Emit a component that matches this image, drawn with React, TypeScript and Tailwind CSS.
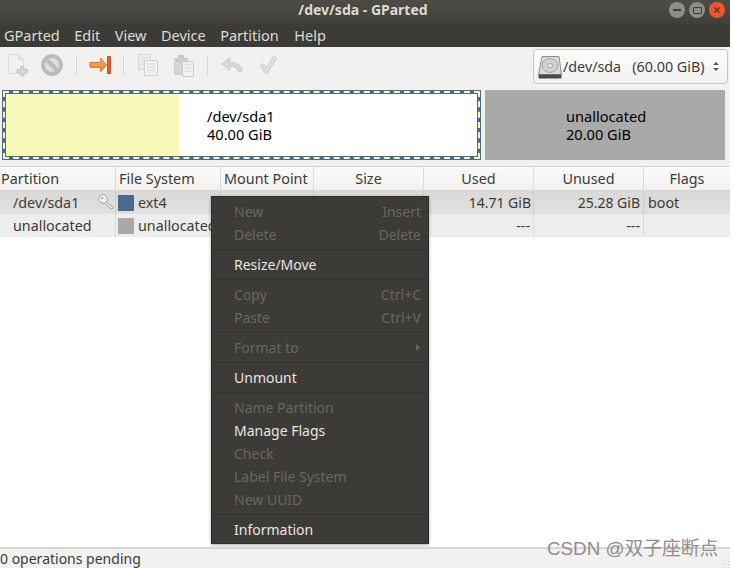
import React from "react";

const font = { fontFamily: '"Noto Sans", "Open Sans", sans-serif' };

function NewIcon() {
  return (
    <svg width="22" height="24" viewBox="0 0 22 24">
      <path d="M1.500 1.500h10l5 5v14h-15z" fill="#f3f2f0" stroke="#dedddb" />
      <path d="M11.500 1.500v5h5z" fill="#e4e3e1" stroke="#dedddb" />
      <path d="M13.500 13.500h3.500v3h3.500v3.500h-3.500v3h-3.500v-3h-3.500v-3.500h3.500z" fill="#d6d6d4" stroke="#c6c6c4" />
    </svg>
  );
}
function StopIcon() {
  return (
    <svg width="22" height="22" viewBox="0 0 22 22">
      <circle cx="11" cy="11" r="9" fill="#dfdedc" stroke="#bcbbb9" strokeWidth="3.800" />
      <path d="M5 5l12 12" stroke="#bcbbb9" strokeWidth="4" />
    </svg>
  );
}
function ApplyArrow() {
  return (
    <svg width="22" height="18" viewBox="0 0 22 18">
      <defs>
        <linearGradient id="ar" x1="0" y1="0" x2="0" y2="1">
          <stop offset="0" stopColor="#f6b07a" />
          <stop offset="1" stopColor="#e87f3a" />
        </linearGradient>
      </defs>
      <path d="M1 6.500h10.500V2l6 7-6 7v-4.500H1.500q-1.200-2.500-.5-5z" fill="url(#ar)" stroke="#dd7a35" />
      <path d="M18.500.500h3v17h-3z" fill="#e8642a" stroke="#c94c15" />
    </svg>
  );
}
function CopyIcon() {
  return (
    <svg width="20" height="22" viewBox="0 0 20 22">
      <path d="M.5.500h12v15h-12z" fill="#eeedeb" stroke="#d6d5d3" />
      <path d="M2.500 4h8M2.500 7h8M2.500 10h8" stroke="#dad9d7" />
      <path d="M6.500 6.500h13v15h-13z" fill="#f2f1ef" stroke="#d2d1cf" />
      <path d="M9 10h8M9 13h8M9 16h8" stroke="#d8d7d5" />
    </svg>
  );
}
function PasteIcon() {
  return (
    <svg width="20" height="23" viewBox="0 0 20 23">
      <path d="M.5 4.500h13v16h-13z" fill="#d8d7d5" stroke="#cdccca" />
      <path d="M4.500 4.500V1.500h5v3h2v3H2.500v-3z" fill="#cfcecc" stroke="#c4c3c1" />
      <path d="M8.500 7.500h11v15h-11z" fill="#f3f2f0" stroke="#cdccca" />
      <path d="M10.500 11h7M10.500 14h7M10.500 17h7" stroke="#d4d3d1" />
    </svg>
  );
}
function UndoIcon() {
  return (
    <svg width="22" height="17" viewBox="0 0 22 17">
      <path d="M9 .5L.8 7l8.200 6.500v-4c4-.5 6 .5 8.500 5 2 1.500 4 .5 3.500-2-1.500-4.500-6-7.500-12.500-7.500z" fill="#d9d8d6" stroke="#d0cfcd" />
    </svg>
  );
}
function CheckIcon() {
  return (
    <svg width="19" height="20" viewBox="0 0 19 20">
      <path d="M1 11l3.500-2.500 3 4L14.500.8l3.500 2L8.500 18.500H6.500z" fill="#dddcda" stroke="#d2d1cf" />
    </svg>
  );
}
function Disk() {
  return (
    <svg width="24" height="24" viewBox="0 0 24 24" className="shrink-0">
      <path d="M4 1.500h17l2.500 18H.5z" fill="#dcdcda" stroke="#8c8c8a" />
      <path d="M.5 19.500h23v3a1 1 0 0 1-1 1h-21a1 1 0 0 1-1-1z" fill="#4a4a48" />
      <ellipse cx="12" cy="10.500" rx="8" ry="7" fill="#d0d0ce" stroke="#a8a8a6" />
      <ellipse cx="12" cy="10.500" rx="2.500" ry="2" fill="#ececea" stroke="#a8a8a6" />
    </svg>
  );
}
function Key() {
  return (
    <svg width="16" height="15" viewBox="0 0 16 15">
      <circle cx="5" cy="5" r="4.300" fill="#f0efed" stroke="#a8a7a5" />
      <circle cx="4" cy="4" r="1.200" fill="#b4b3b1" />
      <path d="M8 8l7 5v1.500h-2.500L6 9" fill="#e8e7e5" stroke="#a8a7a5" />
    </svg>
  );
}

function WinBtn({ kind }: { kind: "min" | "max" | "close" }) {
  if (kind === "close")
    return (
      <div className="w-[16px] h-[16px] rounded-full bg-[#e9592c] flex items-center justify-center">
        <svg width="8" height="8" viewBox="0 0 8 8"><path d="M1.500 1.500l5 5M6.500 1.500l-5 5" stroke="#6e2a12" strokeWidth="1.200" /></svg>
      </div>
    );
  return (
    <div className="w-[16px] h-[16px] rounded-full bg-[#8e8d87] flex items-center justify-center">
      {kind === "min" ? (
        <div className="w-[8px] h-[2px] bg-[#3f3e3a]" />
      ) : (
        <div className="w-[9px] h-[7px] border border-[#3f3e3a] rounded-[1px]" />
      )}
    </div>
  );
}

function Sep() {
  return <div className="w-px h-[21px] bg-[#dbdad7]" />;
}

function Header({ w, label, align = "" }: { w: string; label: string; align?: string }) {
  return (
    <div className={`${w} h-full shrink-0 border-r border-[#dcdbd9] flex items-center ${align}`}>
      {label}
    </div>
  );
}

function MI({ label, hint, on, arrow }: { label: string; hint?: string; on?: boolean; arrow?: boolean }) {
  return (
    <div className={`h-[23px] pl-[22px] pr-[7px] flex items-center justify-between ${on ? "text-[#e8e6e1]" : "text-[#68665f]"}`}>
      <span>{label}</span>
      {hint && <span>{hint}</span>}
      {arrow && (
        <svg width="4" height="7" viewBox="0 0 4 7" className="mr-[1px]"><path d="M0 0l4 3.500L0 7z" fill="#68665f" /></svg>
      )}
    </div>
  );
}
function MS() {
  return (
    <div className="h-[7px] flex items-center">
      <div className="h-px w-full bg-[#33322e]" />
    </div>
  );
}

export default function App() {
  return (
    <div className="relative w-[733px] h-[568px] overflow-hidden bg-white text-[14px] text-[#3c3b37]" style={font}>
      <div className="w-[730px] h-full flex flex-col">
        {/* title */}
        <div className="h-[24px] shrink-0 bg-gradient-to-b from-[#4d4c47] to-[#403f3b] relative flex items-center justify-center">
          <span className="font-bold text-[14px] text-[#dfdbd2] leading-none mb-[4px] mr-[4px]">/dev/sda - GParted</span>
          <div className="absolute right-[5px] top-[2px] flex gap-[4px]">
            <WinBtn kind="min" />
            <WinBtn kind="max" />
            <WinBtn kind="close" />
          </div>
        </div>
        {/* menu */}
        <div className="h-[23px] shrink-0 bg-[#3c3b37] flex items-center pl-[4px] gap-[14.500px] text-[14.5px] text-[#dfdbd2]">
          <span>GParted</span>
          <span>Edit</span>
          <span>View</span>
          <span>Device</span>
          <span>Partition</span>
          <span className="ml-[1px]">Help</span>
        </div>
        {/* toolbar */}
        <div className="h-[38px] shrink-0 bg-[#f2f1f0] flex items-center pl-[7px] pr-[2px]">
          <div className="flex items-center mb-[2px]">
            <NewIcon />
            <div className="ml-[12px]"><StopIcon /></div>
            <div className="ml-[13px]"><Sep /></div>
            <div className="ml-[12px]"><ApplyArrow /></div>
            <div className="ml-[12px]"><Sep /></div>
            <div className="ml-[14px]"><CopyIcon /></div>
            <div className="ml-[16px]"><PasteIcon /></div>
            <div className="ml-[13px]"><Sep /></div>
            <div className="ml-[13px]"><UndoIcon /></div>
            <div className="ml-[16px]"><CheckIcon /></div>
          </div>
          <div className="ml-auto w-[195px] h-[35px] mt-[1px] bg-gradient-to-b from-[#fdfdfd] to-[#f2f1f0] border border-[#c8c6c3] rounded-[4px] flex items-center pl-[4px] pr-[8px] text-[#3c3b37]">
            <Disk />
            <span className="whitespace-pre ml-px text-[14.3px]">/dev/sda   (60.00 GiB)</span>
            <div className="ml-auto flex flex-col gap-[3px]">
              <svg width="6" height="3" viewBox="0 0 6 3"><path d="M3 0L6 3H0z" fill="#5a5955" /></svg>
              <svg width="6" height="3" viewBox="0 0 6 3"><path d="M3 3L6 0H0z" fill="#5a5955" /></svg>
            </div>
          </div>
        </div>
        {/* graph */}
        <div className="h-[81px] shrink-0 bg-[#f2f1f0] pl-[2px] pr-[5px] pt-[5px] flex gap-[4px] text-[14.6px] text-black leading-[18px]">
          <div className="w-[479px] h-[70px] bg-[#4b6a8b] p-[1px]">
            <div className="h-full w-full border-[2px] border-dashed border-[#f8f8b8] bg-[#4b6a8b] p-[1px]">
              <div className="h-full w-full flex">
                <div className="w-[173px] bg-[#f8f8b8]" />
                <div className="flex-1 bg-white flex flex-col justify-center pl-[28px]">
                  <span>/dev/sda1</span>
                  <span>40.00 GiB</span>
                </div>
              </div>
            </div>
          </div>
          <div className="flex-1 h-[70px] bg-[#a9a9a9] flex flex-col justify-center pl-[81px]">
            <span>unallocated</span>
            <span>20.00 GiB</span>
          </div>
        </div>
        {/* tree */}
        <div className="flex-1 min-h-0 bg-white flex flex-col">
          <div className="h-[25px] shrink-0 border-t border-[#d5d4d2] border-b bg-gradient-to-b from-[#fbfbfb] to-[#f2f1f0] flex items-center text-[14.4px]">
            <Header w="w-[116px] pl-[1px]" label="Partition" />
            <Header w="w-[105px] pl-[3px]" label="File System" />
            <Header w="w-[93px] pl-[3px]" label="Mount Point" />
            <Header w="w-[110px]" label="Size" align="justify-center" />
            <Header w="w-[110px]" label="Used" align="justify-center" />
            <Header w="w-[110px]" label="Unused" align="justify-center" />
            <div className="flex-1 text-center">Flags</div>
          </div>
          <div className="h-[23px] shrink-0 bg-gradient-to-b from-[#dcdad8] to-[#e2e0de] flex items-center text-[14.3px]">
            <div className="w-[116px] pl-[13px] border-r border-[#cfcecc] h-full flex items-center relative">
              /dev/sda1
              <div className="absolute left-[98px] top-[3px]"><Key /></div>
            </div>
            <div className="w-[105px] pl-[2px] border-r border-[#cfcecc] h-full flex items-center gap-[4px]">
              <div className="w-[16px] h-[16px] bg-[#4b6a8b]" /> ext4
            </div>
            <div className="w-[93px] h-full border-r border-[#cfcecc]" />
            <div className="w-[110px] h-full border-r border-[#cfcecc]" />
            <div className="w-[110px] h-full border-r border-[#cfcecc] flex items-center justify-end pr-[2px] text-[14px]">14.71 GiB</div>
            <div className="w-[110px] h-full border-r border-[#cfcecc] flex items-center justify-end pr-[3px] text-[14px]">25.28 GiB</div>
            <div className="pl-[4px]">boot</div>
          </div>
          <div className="h-[23px] shrink-0 bg-[#ededed] flex items-center text-[14.3px]">
            <div className="w-[116px] pl-[13px] border-r border-[#dcdbd9] h-full flex items-center">unallocated</div>
            <div className="w-[105px] pl-[2px] border-r border-[#dcdbd9] h-full flex items-center gap-[4px] overflow-hidden whitespace-nowrap">
              <div className="w-[16px] h-[16px] bg-[#a9a9a9] shrink-0" /> unallocated
            </div>
            <div className="w-[93px] h-full border-r border-[#dcdbd9]" />
            <div className="w-[110px] h-full border-r border-[#dcdbd9]" />
            <div className="w-[110px] h-full border-r border-[#dcdbd9] flex items-center justify-end pr-[3px]">---</div>
            <div className="w-[110px] h-full border-r border-[#dcdbd9] flex items-center justify-end pr-[3px]">---</div>
          </div>
        </div>
        {/* status */}
        <div className="h-[21px] shrink-0 bg-[#f2f1f0] border-t-2 border-[#d8d7d5] flex items-center justify-between">
          <span>0 operations pending</span>
          <svg width="11" height="11" viewBox="0 0 11 11" className="self-end">
            <g fill="#d4d3d1">
              <rect x="9" y="1" width="1" height="1" />
              <rect x="6" y="4" width="1" height="1" />
              <rect x="9" y="4" width="1" height="1" />
              <rect x="3" y="7" width="1" height="1" />
              <rect x="6" y="7" width="1" height="1" />
              <rect x="9" y="7" width="1" height="1" />
              <rect x="0" y="10" width="1" height="1" />
              <rect x="3" y="10" width="1" height="1" />
              <rect x="6" y="10" width="1" height="1" />
              <rect x="9" y="10" width="1" height="1" />
            </g>
          </svg>
        </div>
      </div>
      {/* context menu */}
      <div className="absolute left-[211px] top-[196px] w-[218px] h-[348px] bg-[#3c3b37] border border-[#2f2e2b] pt-[3px] shadow-[0_1px_3px_rgba(0,0,0,0.35)]">
        <MI label="New" hint="Insert" />
        <MI label="Delete" hint="Delete" />
        <MS />
        <MI label="Resize/Move" on />
        <MS />
        <MI label="Copy" hint="Ctrl+C" />
        <MI label="Paste" hint="Ctrl+V" />
        <MS />
        <MI label="Format to" arrow />
        <MS />
        <MI label="Unmount" on />
        <MS />
        <MI label="Name Partition" />
        <MI label="Manage Flags" on />
        <MI label="Check" />
        <MI label="Label File System" />
        <MI label="New UUID" />
        <MS />
        <MI label="Information" on />
      </div>
      {/* watermark */}
      <div
        className="absolute left-[547px] top-[536px] text-[18.800px] leading-[26px] text-[#8f8f8f] whitespace-nowrap"
        style={{ fontFamily: '"Liberation Sans", "Noto Sans CJK SC", sans-serif' }}
      >
        CSDN @双子座断点
      </div>
    </div>
  );
}
